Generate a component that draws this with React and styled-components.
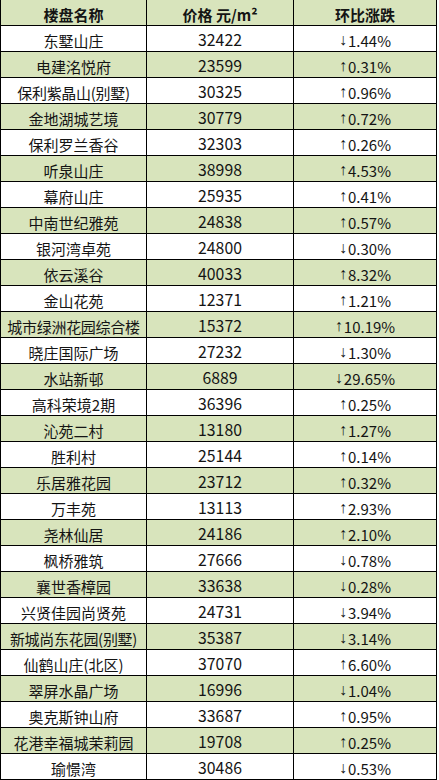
import React from "react";
import styled, { createGlobalStyle } from "styled-components";

const GlobalStyle = createGlobalStyle`
  html, body { margin: 0; padding: 0; background: #ffffff; }
  body { font-family: "Noto Sans CJK SC", "Noto Sans", sans-serif; }
`;

const rows = [
  ["东墅山庄", "32422", "↓", "1.44%"],
  ["电建洺悦府", "23599", "↑", "0.31%"],
  ["保利紫晶山(别墅)", "30325", "↑", "0.96%"],
  ["金地湖城艺境", "30779", "↑", "0.72%"],
  ["保利罗兰香谷", "32303", "↑", "0.26%"],
  ["听泉山庄", "38998", "↑", "4.53%"],
  ["幕府山庄", "25935", "↑", "0.41%"],
  ["中南世纪雅苑", "24838", "↑", "0.57%"],
  ["银河湾卓苑", "24800", "↓", "0.30%"],
  ["依云溪谷", "40033", "↑", "8.32%"],
  ["金山花苑", "12371", "↑", "1.21%"],
  ["城市绿洲花园综合楼", "15372", "↑", "10.19%"],
  ["晓庄国际广场", "27232", "↓", "1.30%"],
  ["水站新邨", "6889", "↓", "29.65%"],
  ["高科荣境2期", "36396", "↑", "0.25%"],
  ["沁苑二村", "13180", "↑", "1.27%"],
  ["胜利村", "25144", "↑", "0.14%"],
  ["乐居雅花园", "23712", "↑", "0.32%"],
  ["万丰苑", "13113", "↑", "2.93%"],
  ["尧林仙居", "24186", "↑", "2.10%"],
  ["枫桥雅筑", "27666", "↓", "0.78%"],
  ["襄世香樟园", "33638", "↓", "0.28%"],
  ["兴贤佳园尚贤苑", "24731", "↓", "3.94%"],
  ["新城尚东花园(别墅)", "35387", "↓", "3.14%"],
  ["仙鹤山庄(北区)", "37070", "↑", "6.60%"],
  ["翠屏水晶广场", "16996", "↓", "1.04%"],
  ["奥克斯钟山府", "33687", "↑", "0.95%"],
  ["花港幸福城茉莉园", "19708", "↑", "0.25%"],
  ["瑜憬湾", "30486", "↓", "0.53%"],
];

const Table = styled.div`
  width: 437px;
  border-left: 1px solid #000;
  box-sizing: border-box;
  color: #141414;
`;

const Row = styled.div`
  display: grid;
  grid-template-columns: 146px 147px 143px;
  height: 26px;
  box-sizing: border-box;
  border-bottom: 1px solid #000;
  background: ${(p) => (p.$green ? "#d8e4bc" : "#ffffff")};
`;

const Cell = styled.div`
  display: flex;
  align-items: center;
  justify-content: center;
  box-sizing: border-box;
  padding-top: 3px;
  border-right: 1px solid #000;
  font-size: ${(p) => (p.$num ? "15.8px" : "15px")};
  font-weight: ${(p) => (p.$head ? 700 : 400)};
  white-space: nowrap;
  line-height: 1;
  letter-spacing: ${(p) => (p.$tight ? "-0.3px" : "0")};
`;

const Change = styled.span`
  display: inline-flex;
  align-items: center;
`;

const Arrow = styled.span`
  font-family: "Liberation Sans", sans-serif;
  font-size: 16px;
  line-height: 1;
  margin-right: 1px;
`;

export default function App() {
  return (
    <>
      <GlobalStyle />
      <Table>
        <Row $green>
          <Cell $head>楼盘名称</Cell>
          <Cell $head>价格 元/m²</Cell>
          <Cell $head>环比涨跌</Cell>
        </Row>
        {rows.map(([name, price, arrow, pct], i) => (
          <Row key={name} $green={i % 2 === 1}>
            <Cell $tight={name.length >= 9}>{name}</Cell>
            <Cell $num>{price}</Cell>
            <Cell>
              <Change>
                <Arrow>{arrow}</Arrow>
                {pct}
              </Change>
            </Cell>
          </Row>
        ))}
      </Table>
    </>
  );
}
